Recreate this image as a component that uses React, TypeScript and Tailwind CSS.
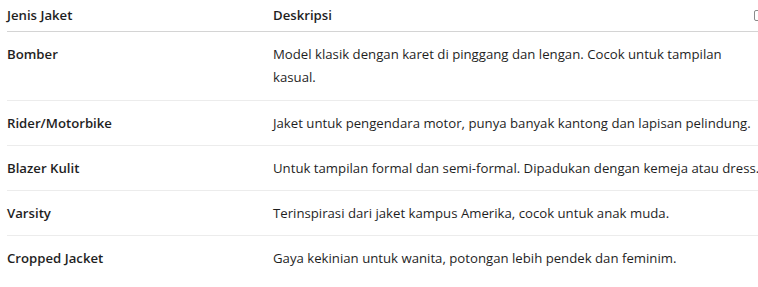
const rows = [
  {
    name: 'Bomber',
    desc: (
      <>
        Model klasik dengan karet di pinggang dan lengan. Cocok untuk tampilan
        <br />
        kasual.
      </>
    ),
  },
  { name: 'Rider/Motorbike', desc: 'Jaket untuk pengendara motor, punya banyak kantong dan lapisan pelindung.' },
  { name: 'Blazer Kulit', desc: 'Untuk tampilan formal dan semi-formal. Dipadukan dengan kemeja atau dress.' },
  { name: 'Varsity', desc: 'Terinspirasi dari jaket kampus Amerika, cocok untuk anak muda.' },
  { name: 'Cropped Jacket', desc: 'Gaya kekinian untuk wanita, potongan lebih pendek dan feminim.' },
];

export default function App() {
  return (
    <div className="relative w-[758px] h-[287px] overflow-hidden bg-white pl-[7px] text-[#1f1f1f] font-['Open_Sans',sans-serif] text-[13.2px]">
      <div className="absolute left-[754px] top-[10px] w-[10px] h-[11px] rounded-[2px] border border-[#8a8a8a]" />
      <table className="w-[820px] table-fixed border-collapse">
        <colgroup>
          <col className="w-[266px]" />
          <col />
        </colgroup>
        <thead>
          <tr className="border-b border-[#d4d4d4]">
            <th className="pt-[4px] pb-[4px] text-left font-semibold leading-[23px]">Jenis Jaket</th>
            <th className="pt-[4px] pb-[4px] text-left font-semibold leading-[23px]">Deskripsi</th>
          </tr>
        </thead>
        <tbody>
          {rows.map((r, i) => (
            <tr key={r.name} className={i < rows.length - 1 ? 'border-b border-[#ececec]' : ''}>
              <td className={`pt-[11px] align-top font-semibold leading-[23px] ${i === 0 ? 'pb-[11px]' : 'pb-[10px]'}`}>{r.name}</td>
              <td className={`pt-[11px] align-top leading-[23px] whitespace-nowrap ${i === 0 ? 'pb-[11px]' : 'pb-[10px]'}`}>{r.desc}</td>
            </tr>
          ))}
        </tbody>
      </table>
    </div>
  );
}
